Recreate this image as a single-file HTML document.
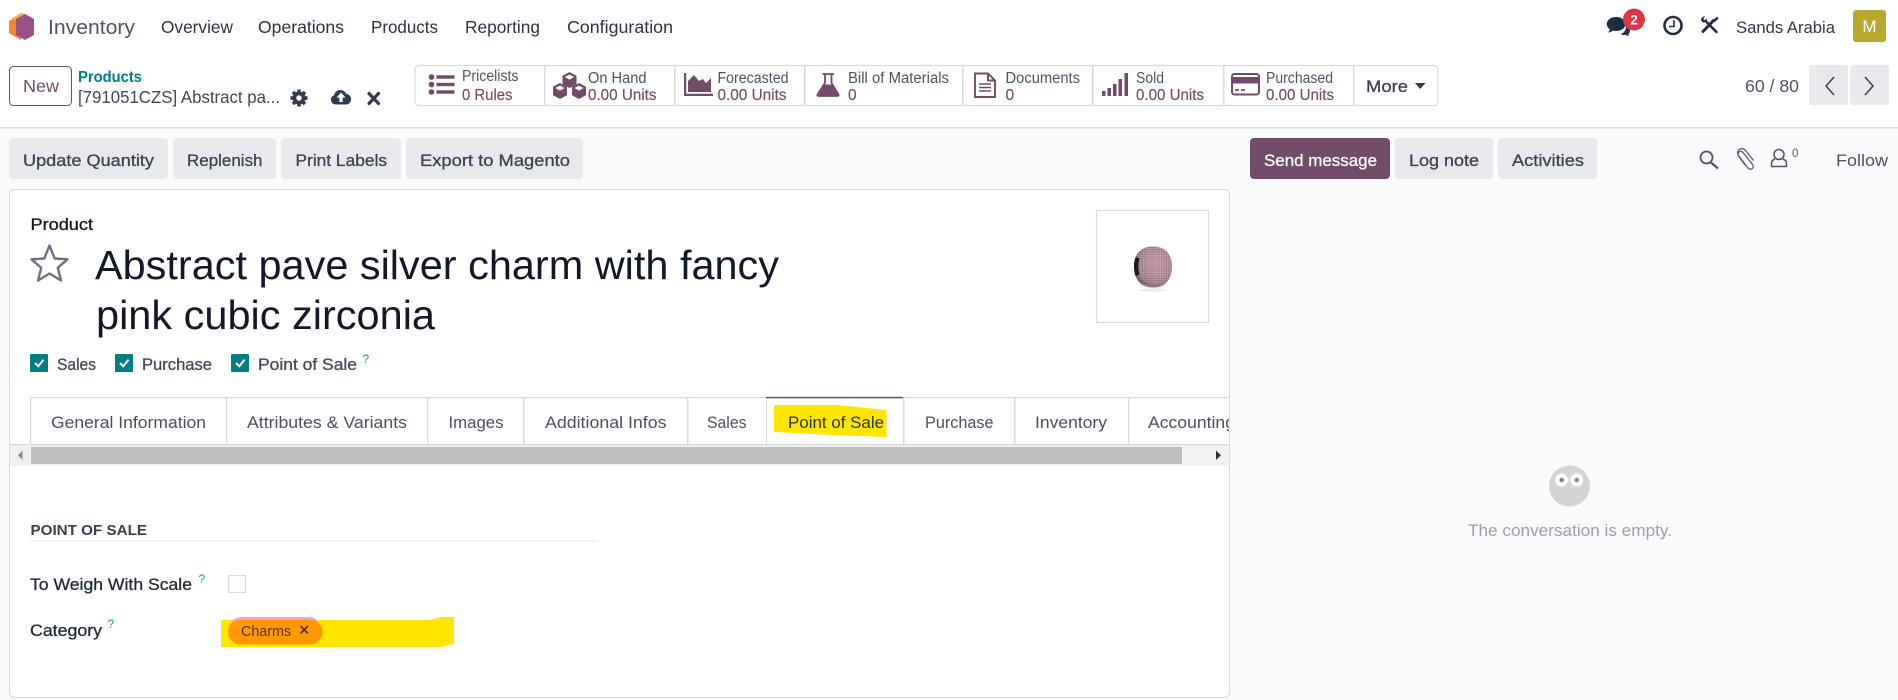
<!DOCTYPE html>
<html lang="en">
<head>
<meta charset="utf-8">
<title>Inventory - Product</title>
<style>
html,body{margin:0;padding:0;background:#fff;width:1898px;height:700px;overflow:hidden}
svg{display:block;position:absolute;left:0;top:0}
text{font-family:"Liberation Sans",sans-serif;white-space:pre}
.m{stroke-width:.3px;stroke:currentColor;fill:currentColor}
.n{fill:#2b3442;font-size:17.5px}
.s{fill:#4b5563;font-size:15.5px}
.v{fill:#714b67;font-size:15.5px;stroke:#714b67;stroke-width:.15px}
.b{color:#3b4453;font-size:17px}
.t{fill:#475160;font-size:17px}
.c{color:#414a58;font-size:16.5px}
.q{fill:#0f90c0;font-size:12px}
</style>
</head>
<body>
<svg width="1898" height="700" viewBox="0 0 1898 700" xmlns="http://www.w3.org/2000/svg">
<defs>
<g id="cube"><path d="M0-8 7-4.2V4.2L0 8-7 4.2V-4.2Z" fill="#714b67"/><path d="M0-5.4 4.6-3 0-.4-4.6-3Z" fill="#fff"/></g>
<pattern id="dots" width="2.4" height="2.4" patternUnits="userSpaceOnUse"><rect width="2.4" height="2.4" fill="#9c7c89"/><circle cx="1.2" cy="1.2" r=".8" fill="#dba9bb"/></pattern>
<radialGradient id="shade" cx=".58" cy=".42" r=".62"><stop offset="0" stop-color="#fff" stop-opacity=".1"/><stop offset=".75" stop-color="#7d6570" stop-opacity=".2"/><stop offset="1" stop-color="#3e3a3c" stop-opacity=".7"/></radialGradient>
</defs>

<!-- page background -->
<rect width="1898" height="700" fill="#fff"/>
<rect y="127" width="1898" height="573" fill="#f9fafb"/>
<rect y="127" width="1898" height="1.500" fill="#d8dadd"/>

<!-- logo -->
<path d="M9 21 21 14V40L9 33Z" fill="#f9852c"/>
<path d="M11 19 21 13 25 14 16 20Z" fill="#fbb03b"/>
<path d="M25 14 34 19V35L25 40 16 35V19Z" fill="#985184"/>

<!-- top nav -->
<text x="48" y="34" font-size="20.500" fill="#4b5563" textLength="87" lengthAdjust="spacingAndGlyphs">Inventory</text>
<text class="n" x="161" y="33" textLength="72" lengthAdjust="spacingAndGlyphs">Overview</text>
<text class="n" x="258" y="33" textLength="86" lengthAdjust="spacingAndGlyphs">Operations</text>
<text class="n" x="371" y="33" textLength="67" lengthAdjust="spacingAndGlyphs">Products</text>
<text class="n" x="465" y="33" textLength="75" lengthAdjust="spacingAndGlyphs">Reporting</text>
<text class="n" x="567" y="33" textLength="106" lengthAdjust="spacingAndGlyphs">Configuration</text>

<!-- systray -->
<g fill="#1f2d40">
<path d="M1616 17c5.500 0 9.500 3 9.500 7s-4 7-9.500 7c-1 0-2-.1-3-.4-1.500 1.200-3.200 1.800-5 1.900 1-.9 1.600-2 1.800-3.300-1.800-1.300-3-3.100-3-5.200 0-4 4-7 9.200-7Z"/>
<path d="M1626 27c2.500 .6 4 2.100 4 4 0 1.300-.7 2.400-1.800 3.200 .2.800.5 1.500 1.200 2-1.300-.1-2.600-.5-3.600-1.400-1.800.4-3.600.1-5.300-.7 2.800-.6 5.300-3.200 5.500-7.100Z"/>
</g>
<circle cx="1634" cy="19.500" r="11" fill="#dc3545"/>
<text x="1634" y="24.500" font-size="13.500" font-weight="bold" fill="#fff" text-anchor="middle">2</text>
<circle cx="1673" cy="25.500" r="8.500" fill="none" stroke="#1f2d40" stroke-width="2.600"/>
<path d="M1674 20V26.500H1669" fill="none" stroke="#1f2d40" stroke-width="1.600"/>
<g stroke="#1f2d40" fill="none" stroke-linecap="round">
<path d="M1706.500 22 1716.500 32" stroke-width="2.600"/>
<path d="M1713.500 20.500 1703 31.500" stroke-width="3"/>
</g>
<path d="M1701 20c.2-2.500 2-3.800 4.200-3.600l-2 2.300 1.500 1.600 2.300-1.800c.3 2.300-1.600 4.600-4.300 3.900Z" fill="#1f2d40"/>
<path d="M1717.500 16.500 1718.500 18.500 1715 22 1713 20Z" fill="#1f2d40"/>
<text x="1736" y="33" font-size="17" fill="#2f3846" textLength="99" lengthAdjust="spacingAndGlyphs">Sands Arabia</text>
<rect x="1853" y="10" width="33" height="32" rx="3" fill="#b9a82e"/>
<text x="1869.500" y="32" font-size="17" fill="#fff" text-anchor="middle">M</text>

<!-- control panel: new + breadcrumb -->
<rect x="9.500" y="66.500" width="62" height="39" rx="4" fill="#fff" stroke="#714b67"/>
<text x="23" y="92" font-size="17.500" fill="#714b67" textLength="36" lengthAdjust="spacingAndGlyphs">New</text>
<text x="78" y="82" font-size="15.500" font-weight="bold" fill="#017e84" textLength="64" lengthAdjust="spacingAndGlyphs">Products</text>
<text x="78" y="103" font-size="17.500" fill="#3f4857" textLength="202" lengthAdjust="spacingAndGlyphs">[791051CZS] Abstract pa...</text>
<!-- gear -->
<g transform="translate(299 98)" fill="#2f3b4e">
<circle r="6.500"/>
<rect x="-1.800" y="-8.500" width="3.600" height="17"/><rect x="-1.800" y="-8.500" width="3.600" height="17" transform="rotate(45)"/><rect x="-1.800" y="-8.500" width="3.600" height="17" transform="rotate(90)"/><rect x="-1.800" y="-8.500" width="3.600" height="17" transform="rotate(135)"/>
<circle r="2.700" fill="#fff"/>
</g>
<!-- cloud upload -->
<path d="M336 104.500c-3 0-5-2-5-4.700 0-2.200 1.300-3.900 3.200-4.500 .3-3 2.900-5.300 6.200-5.300 2.600 0 4.800 1.500 5.700 3.700 2.900.3 5 2.700 5 5.500 0 3-2.300 5.300-5.300 5.300Z" fill="#2f3b4e"/>
<path d="M341 92.500 336.500 97.500H339.300V102H342.700V97.500H345.500Z" fill="#fff"/>
<!-- discard -->
<path d="M369 93.500 378.500 103.500M378.500 93.500 369 103.500" stroke="#2f3b4e" stroke-width="3.200" stroke-linecap="round"/>

<!-- stat buttons -->
<rect x="415" y="65.500" width="1023" height="40" rx="4" fill="#fff" stroke="#d8dadd" stroke-width="1.200"/>
<g fill="#d8dadd">
<rect x="544" y="66" width="1.500" height="39"/><rect x="674" y="66" width="1.500" height="39"/><rect x="804" y="66" width="1.500" height="39"/><rect x="962" y="66" width="1.500" height="39"/><rect x="1092" y="66" width="1.500" height="39"/><rect x="1223" y="66" width="1.500" height="39"/><rect x="1353" y="66" width="1.500" height="39"/>
</g>
<!-- list -->
<g fill="#714b67"><circle cx="431.500" cy="77" r="2.800"/><circle cx="431.500" cy="84.500" r="2.800"/><circle cx="431.500" cy="92" r="2.800"/><rect x="436.500" y="75.300" width="18" height="3.400"/><rect x="436.500" y="82.800" width="18" height="3.400"/><rect x="436.500" y="90.300" width="18" height="3.400"/></g>
<!-- cubes -->
<use href="#cube" x="569.500" y="80"/><use href="#cube" x="560" y="91"/><use href="#cube" x="579" y="91"/>
<!-- area chart -->
<path d="M684 73H686.200V93.800H713V96H684Z" fill="#714b67"/>
<path d="M688 92V81L694 75 699 81 703 79 706 83 711 78V92Z" fill="#714b67"/>
<!-- flask -->
<path d="M822.500 74H834M825 74.500V83L817.500 94.500Q817 96 819 96H837Q839 96 838.500 94.500L831.500 83V74.500" fill="none" stroke="#714b67" stroke-width="1.800"/>
<path d="M824 84.500H833L838.500 96H818Z" fill="#714b67"/>
<!-- document -->
<path d="M975 73.500H988L995 80.500V97H975Z M988 73.500V80.500H995" fill="none" stroke="#714b67" stroke-width="1.900"/>
<path d="M979 84H991M979 87.500H991M979 91H991" stroke="#714b67" stroke-width="1.600"/>
<!-- signal -->
<g fill="#714b67"><rect x="1102" y="91" width="3.500" height="5"/><rect x="1107.500" y="88" width="3.500" height="8"/><rect x="1113" y="84" width="3.500" height="12"/><rect x="1118.500" y="79" width="3.500" height="17"/><rect x="1124.500" y="73" width="3.500" height="23"/></g>
<!-- credit card -->
<rect x="1232" y="74" width="27" height="20.500" rx="2.500" fill="#fff" stroke="#714b67" stroke-width="2"/>
<rect x="1232" y="77" width="27" height="6.500" fill="#714b67"/>
<path d="M1235 90H1239M1241 90H1245" stroke="#714b67" stroke-width="1.800"/>

<text class="s" x="462" y="81" textLength="56.500" lengthAdjust="spacingAndGlyphs">Pricelists</text>
<text class="v" x="462" y="100" textLength="50.500" lengthAdjust="spacingAndGlyphs">0 Rules</text>
<text class="s" x="588" y="83" textLength="58.500" lengthAdjust="spacingAndGlyphs">On Hand</text>
<text class="v" x="588" y="100" textLength="68.500" lengthAdjust="spacingAndGlyphs">0.00 Units</text>
<text class="s" x="717.500" y="83" textLength="71" lengthAdjust="spacingAndGlyphs">Forecasted</text>
<text class="v" x="717.500" y="100" textLength="69" lengthAdjust="spacingAndGlyphs">0.00 Units</text>
<text class="s" x="848" y="83" textLength="101" lengthAdjust="spacingAndGlyphs">Bill of Materials</text>
<text class="v" x="848" y="100">0</text>
<text class="s" x="1005.500" y="83" textLength="74.500" lengthAdjust="spacingAndGlyphs">Documents</text>
<text class="v" x="1005.500" y="100">0</text>
<text class="s" x="1136" y="83" textLength="28" lengthAdjust="spacingAndGlyphs">Sold</text>
<text class="v" x="1136" y="100" textLength="68" lengthAdjust="spacingAndGlyphs">0.00 Units</text>
<text class="s" x="1266" y="83" textLength="67" lengthAdjust="spacingAndGlyphs">Purchased</text>
<text class="v" x="1266" y="100" textLength="68" lengthAdjust="spacingAndGlyphs">0.00 Units</text>
<text class="m b" x="1366" y="92" textLength="42" lengthAdjust="spacingAndGlyphs">More</text>
<path d="M1415 83H1425.500L1420.200 89Z" fill="#2f3b4e"/>

<!-- pager -->
<text x="1745" y="92" font-size="17.500" fill="#4b5563" textLength="54" lengthAdjust="spacingAndGlyphs">60 / 80</text>
<rect x="1809" y="65" width="39" height="40" rx="3" fill="#e7e9ed"/>
<rect x="1850" y="65" width="39" height="40" rx="3" fill="#e7e9ed"/>
<path d="M1834 77 1826 86 1834 95" fill="none" stroke="#374151" stroke-width="1.500"/>
<path d="M1865 77 1873 86 1865 95" fill="none" stroke="#374151" stroke-width="1.500"/>

<!-- action buttons -->
<g fill="#e7e9ed">
<rect x="9" y="138" width="159" height="41" rx="4"/><rect x="173" y="138" width="103" height="41" rx="4"/><rect x="281" y="138" width="120" height="41" rx="4"/><rect x="406" y="138" width="177" height="41" rx="4"/>
<rect x="1395" y="138" width="98" height="41" rx="4"/><rect x="1498" y="138" width="99" height="41" rx="4"/>
</g>
<rect x="1250" y="138" width="140" height="41" rx="4" fill="#714b67"/>
<text class="m b" x="23" y="166" textLength="131" lengthAdjust="spacingAndGlyphs">Update Quantity</text>
<text class="m b" x="187" y="166" textLength="75.500" lengthAdjust="spacingAndGlyphs">Replenish</text>
<text class="m b" x="295.500" y="166" textLength="91.500" lengthAdjust="spacingAndGlyphs">Print Labels</text>
<text class="m b" x="420" y="166" textLength="150" lengthAdjust="spacingAndGlyphs">Export to Magento</text>
<text class="m" x="1264" y="166" font-size="17" style="color:#fff" textLength="113" lengthAdjust="spacingAndGlyphs">Send message</text>
<text class="m b" x="1409" y="166" textLength="70" lengthAdjust="spacingAndGlyphs">Log note</text>
<text class="m b" x="1512" y="166" textLength="72" lengthAdjust="spacingAndGlyphs">Activities</text>

<!-- chatter icons -->
<circle cx="1706.500" cy="157.500" r="6" fill="none" stroke="#4b5563" stroke-width="1.800"/>
<path d="M1711 162.500 1718 168.500" stroke="#4b5563" stroke-width="2.200"/>
<path d="M1745 165 1738.500 156c-2-3 2-6.500 4.500-3.500l9.500 12c2.500 3.500-2 6.500-4.500 3.500l-9.500-12.500c-3.500-5 3.500-9.500 7-5l8 10" fill="none" stroke="#5b6472" stroke-width="1.400"/>
<circle cx="1779" cy="154.500" r="5" fill="none" stroke="#4b5563" stroke-width="1.500"/>
<path d="M1775 159c-2.500 1-3.500 2.500-3.500 4.500V166.500H1786.500V163.500c0-2-1-3.500-3.500-4.500" fill="none" stroke="#4b5563" stroke-width="1.500"/>
<text x="1792" y="157" font-size="11.500" fill="#4b5563">0</text>
<text x="1836" y="166" font-size="17" fill="#4b5563" textLength="52" lengthAdjust="spacingAndGlyphs">Follow</text>

<!-- form card -->
<rect x="9.500" y="189.500" width="1220" height="508" rx="5" fill="#fff" stroke="#d8dadd"/>
<text class="m" x="30.500" y="230" font-size="16.500" style="color:#111827" textLength="62.500" lengthAdjust="spacingAndGlyphs">Product</text>
<path d="M49.500 245.500 54.700 258.500 67.500 259.300 57.800 267.800 61 280.500 49.500 273.500 38 280.500 41.200 267.800 31.500 259.300 44.300 258.500Z" fill="none" stroke="#6b7280" stroke-width="2.400" stroke-linejoin="round"/>
<text x="95" y="279" font-size="40.500" fill="#111827" textLength="684" lengthAdjust="spacingAndGlyphs">Abstract pave silver charm with fancy</text>
<text x="96" y="329" font-size="40.500" fill="#111827" textLength="339" lengthAdjust="spacingAndGlyphs">pink cubic zirconia</text>

<!-- product image -->
<rect x="1096.500" y="210.500" width="112" height="112" fill="#fff" stroke="#d8dadd" stroke-width="1.200"/>
<ellipse cx="1153" cy="290" rx="13" ry="1.800" fill="#ebe9e9"/>
<path id="bead" d="M1153 246.500C1166 246.500 1172 255 1172 266.500S1166 287.500 1153 287.500 1134 278 1134 266.500 1140 246.500 1153 246.500Z" fill="url(#dots)"/>
<path d="M1153 246.500C1166 246.500 1172 255 1172 266.500S1166 287.500 1153 287.500 1134 278 1134 266.500 1140 246.500 1153 246.500Z" fill="url(#shade)"/>
<path d="M1135.500 257c-2 6-2 13 0 19l4-1.500c-1.400-5-1.400-11 0-16Z" fill="#1d1c1d"/>
<path d="M1141 283.500c8 4.500 17 4.500 24 0" fill="none" stroke="#8d8a8b" stroke-width="1.600"/>

<!-- checkboxes -->
<g fill="#017e84"><rect x="30" y="354" width="18" height="18" rx="1"/><rect x="115" y="354" width="18" height="18" rx="1"/><rect x="231" y="354" width="18" height="18" rx="1"/></g>
<g fill="none" stroke="#fff" stroke-width="2"><path d="M35 363 38.300 366.300 43.500 359.800"/><path d="M120 363 123.300 366.300 128.500 359.800"/><path d="M236 363 239.300 366.300 244.500 359.800"/></g>
<text class="m c" x="57" y="370" textLength="39" lengthAdjust="spacingAndGlyphs">Sales</text>
<text class="m c" x="142" y="370" textLength="70" lengthAdjust="spacingAndGlyphs">Purchase</text>
<text class="m c" x="258" y="370" textLength="99" lengthAdjust="spacingAndGlyphs">Point of Sale</text>
<text class="q" x="362.500" y="363">?</text>

<!-- tabs -->
<rect x="30" y="397" width="1199" height="1.200" fill="#d8dadd"/>
<rect x="10" y="444" width="1219" height="1.500" fill="#d8dadd"/>
<g fill="#d8dadd">
<rect x="30" y="397" width="1.200" height="47"/><rect x="226" y="397" width="1.200" height="47"/><rect x="427" y="397" width="1.200" height="47"/><rect x="523" y="397" width="1.500" height="47"/><rect x="687" y="397" width="1.500" height="47"/><rect x="766" y="397" width="1" height="47"/><rect x="903" y="397" width="1.500" height="47"/><rect x="1014" y="397" width="1.500" height="47"/><rect x="1128" y="397" width="1.200" height="47"/>
</g>
<rect x="766" y="396.800" width="137" height="1.500" fill="#714b67"/>
<path d="M774 405 836 405 886.500 410 886.500 437 832 435 774 432Z" fill="#ffe600"/>
<text class="t" x="51" y="428" textLength="155" lengthAdjust="spacingAndGlyphs">General Information</text>
<text class="t" x="247" y="428" textLength="160" lengthAdjust="spacingAndGlyphs">Attributes &amp; Variants</text>
<text class="t" x="448.500" y="428" textLength="55" lengthAdjust="spacingAndGlyphs">Images</text>
<text class="t" x="545" y="428" textLength="121.500" lengthAdjust="spacingAndGlyphs">Additional Infos</text>
<text class="t" x="707" y="428" textLength="39.500" lengthAdjust="spacingAndGlyphs">Sales</text>
<text x="788" y="428" font-size="17" fill="#2b3346" textLength="96" lengthAdjust="spacingAndGlyphs">Point of Sale</text>
<text class="t" x="925" y="428" textLength="68.500" lengthAdjust="spacingAndGlyphs">Purchase</text>
<text class="t" x="1035" y="428" textLength="72" lengthAdjust="spacingAndGlyphs">Inventory</text>
<svg x="1148" y="400" width="81" height="40" viewBox="1148 400 81 40"><text class="t" x="1148" y="428" textLength="87" lengthAdjust="spacingAndGlyphs">Accounting</text></svg>

<!-- tab scrollbar -->
<rect x="10" y="446" width="1219" height="20" fill="#f1f1f1"/>
<rect x="31" y="447" width="1151" height="17" fill="#bebebe"/>
<path d="M22.500 450.500V460L18 455.200Z" fill="#8d8d8d"/>
<path d="M1216 450.500V460L1221 455.200Z" fill="#333"/>

<!-- point of sale section -->
<text x="30.500" y="535" font-size="14.500" font-weight="bold" fill="#374151" textLength="116.500" lengthAdjust="spacingAndGlyphs">POINT OF SALE</text>
<rect x="30" y="540.500" width="569" height="1" fill="#e2e4e8"/>
<text class="m" x="30" y="590" font-size="17" style="color:#1f2937" textLength="162" lengthAdjust="spacingAndGlyphs">To Weigh With Scale</text>
<text class="q" x="198.500" y="583">?</text>
<rect x="228.500" y="575.500" width="17" height="17" fill="#fff" stroke="#d8dadd" stroke-width="1.200"/>
<text class="m" x="30" y="636" font-size="17" style="color:#1f2937" textLength="72" lengthAdjust="spacingAndGlyphs">Category</text>
<text class="q" x="107.500" y="628">?</text>

<!-- highlighted tag -->
<path d="M221 620H430L441 617H454V644L441 647H221Z" fill="#ffe600"/>
<rect x="229" y="617" width="92" height="24" rx="12" fill="#f9a0cf"/>
<rect x="228" y="619.500" width="94.500" height="25" rx="12.500" fill="#ff9800"/>
<text x="241" y="636" font-size="14.500" fill="#5b2f00" textLength="50" lengthAdjust="spacingAndGlyphs">Charms</text>
<path d="M300.500 626 308 633.500M308 626 300.500 633.500" stroke="#5b2f00" stroke-width="1.700"/>

<!-- empty chatter -->
<circle cx="1569.500" cy="486" r="20.500" fill="#d3d5d4"/>
<circle cx="1561.700" cy="480" r="6.500" fill="#fff"/><circle cx="1576.700" cy="480" r="6.500" fill="#fff"/>
<circle cx="1561.700" cy="480" r="2.300" fill="#85888a"/><circle cx="1576.700" cy="480" r="2.300" fill="#85888a"/>
<text x="1468" y="536" font-size="17" fill="#9aa0ab" textLength="204" lengthAdjust="spacingAndGlyphs">The conversation is empty.</text>
</svg>
</body>
</html>
